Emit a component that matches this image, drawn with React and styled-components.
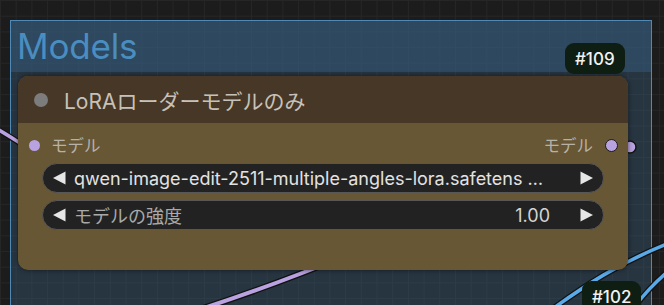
import React from "react";
import styled, { createGlobalStyle } from "styled-components";

const GlobalStyle = createGlobalStyle`
  html, body { margin: 0; padding: 0; background: #1c1c1c; overflow: hidden; }
  * { box-sizing: border-box; }
`;

const FONT = `Inter, "Noto Sans CJK JP", "Noto Sans", sans-serif`;

const Canvas = styled.div`
  position: relative;
  width: 664px;
  height: 305px;
  overflow: hidden;
  background-color: #1c1c1c;
  background-image:
    linear-gradient(to right, #262626 1px, transparent 1px),
    linear-gradient(to bottom, #262626 1px, transparent 1px);
  background-size: 15.7px 15.7px;
  font-family: ${FONT};
`;

const Group = styled.div`
  position: absolute;
  left: 10px;
  top: 20px;
  width: 642px;
  height: 320px;
  border: 1.5px solid #5189b6;
  display: flex;
  flex-direction: column;
`;

const GroupTitle = styled.div`
  height: 51px;
  background: rgba(52, 91, 124, 0.7);
  color: #4a8dc0;
  font-family: Inter, "Liberation Sans", sans-serif;
  font-size: 35px;
  line-height: 51px;
  padding-left: 6px;
  letter-spacing: -0.2px;
`;

const GroupBody = styled.div`
  flex: 1;
  background: rgba(60, 100, 135, 0.35);
`;

const WireLayer = styled.svg`
  position: absolute;
  left: 0;
  top: 0;
  width: 664px;
  height: 305px;
  overflow: visible;
`;

const Node = styled.div`
  position: absolute;
  left: 18px;
  top: 76px;
  width: 610px;
  height: 194px;
  border-radius: 10px;
  background: #685735;
  box-shadow: 0 0 5px rgba(0, 0, 0, 0.55);
  display: flex;
  flex-direction: column;
`;

const NodeTitle = styled.div`
  height: 47px;
  background: #473726;
  border-radius: 10px 10px 0 0;
  display: flex;
  align-items: center;
  gap: 16px;
  padding-left: 16px;
  color: #c6c2ba;
  font-size: 21px;
`;

const Dot = styled.span`
  width: 14px;
  height: 14px;
  border-radius: 50%;
  background: #7c7c7c;
  flex: none;
`;

const NodeBody = styled.div`
  flex: 1;
  display: flex;
  flex-direction: column;
  padding: 10px 24px 0;
`;

const SlotRow = styled.div`
  height: 24px;
  margin: 0 -14px 6px -13px;
  display: flex;
  align-items: center;
  justify-content: space-between;
  font-size: 16.5px;
  color: #b7b2a8;
`;

const Slot = styled.div`
  display: flex;
  align-items: center;
  gap: ${(p) => (p.$out ? "12px" : "11px")};
`;

const SlotDot = styled.span`
  width: ${(p) => (p.$out ? "13px" : "11px")};
  height: ${(p) => (p.$out ? "13px" : "11px")};
  border-radius: 50%;
  background: #b9a2e0;
  border: ${(p) => (p.$out ? "1.5px solid #1a1a1a" : "none")};
  flex: none;
`;

const Widgets = styled.div`
  display: flex;
  flex-direction: column;
  gap: 7px;
`;

const Widget = styled.div`
  height: 30px;
  border-radius: 15px;
  background: #222222;
  border: 1px solid #575757;
  display: flex;
  align-items: center;
  padding: 0 9px 0 9px;
  font-size: 18px;
  white-space: nowrap;
`;

const Label = styled.span`
  flex: 1;
  margin-left: 8px;
  overflow: hidden;
  color: ${(p) => (p.$value ? "#e2e2e2" : "#a9a9a9")};
`;

const Value = styled.span`
  color: #d4d4d4;
  margin-right: 30px;
`;

const Arrow = ({ dir }) => (
  <svg width="14" height="14" viewBox="0 0 14 14" style={{ flex: "none" }}>
    {dir === "left" ? (
      <polygon points="13.5,0.5 13.5,13.5 1,7" fill="#e6e6e6" />
    ) : (
      <polygon points="0.5,0.5 0.5,13.5 13,7" fill="#e6e6e6" />
    )}
  </svg>
);

const Badge = styled.div`
  position: absolute;
  left: ${(p) => p.$x}px;
  top: ${(p) => p.$y}px;
  height: 31px;
  padding: 0 10px;
  border-radius: 9px;
  background: #0f1e13;
  color: #f2f2f2;
  font-size: 17px;
  font-weight: 500;
  display: flex;
  align-items: center;
  z-index: 3;
`;

const Wire = ({ d, color, w }) => (
  <>
    <path d={d} stroke="#111" strokeWidth={w + 2.5} fill="none" strokeLinecap="round" />
    <path d={d} stroke={color} strokeWidth={w} fill="none" strokeLinecap="round" />
  </>
);

export default function App() {
  return (
    <>
      <GlobalStyle />
      <Canvas>
        <Group>
          <GroupTitle>Models</GroupTitle>
          <GroupBody />
        </Group>
        <WireLayer viewBox="0 0 664 305">
          <Wire d="M -8 126 Q 6 134 20 143" color="#b9a2e0" w={3.5} />
          <Wire d="M 185 314 Q 262 290 345 256" color="#b9a2e0" w={4} />
          <Wire d="M 540 318 C 585 285, 620 262, 672 242" color="#5aaae8" w={3.5} />
          <Wire d="M 625 318 C 640 300, 652 284, 672 268" color="#5aaae8" w={3.5} />
          <circle cx="630" cy="147" r="6" fill="#b9a2e0" stroke="#151515" strokeWidth="1.5" />
        </WireLayer>
        <Node>
          <NodeTitle>
            <Dot />
            LoRAローダーモデルのみ
          </NodeTitle>
          <NodeBody>
            <SlotRow>
              <Slot>
                <SlotDot />
                モデル
              </Slot>
              <Slot $out>
                モデル
                <SlotDot $out />
              </Slot>
            </SlotRow>
            <Widgets>
              <Widget>
                <Arrow dir="left" />
                <Label $value>qwen-image-edit-2511-multiple-angles-lora.safetens …</Label>
                <Arrow dir="right" />
              </Widget>
              <Widget>
                <Arrow dir="left" />
                <Label>モデルの強度</Label>
                <Value>1.00</Value>
                <Arrow dir="right" />
              </Widget>
            </Widgets>
          </NodeBody>
        </Node>
        <Badge $x={565} $y={43}>#109</Badge>
        <Badge $x={582} $y={281}>#102</Badge>
      </Canvas>
    </>
  );
}
